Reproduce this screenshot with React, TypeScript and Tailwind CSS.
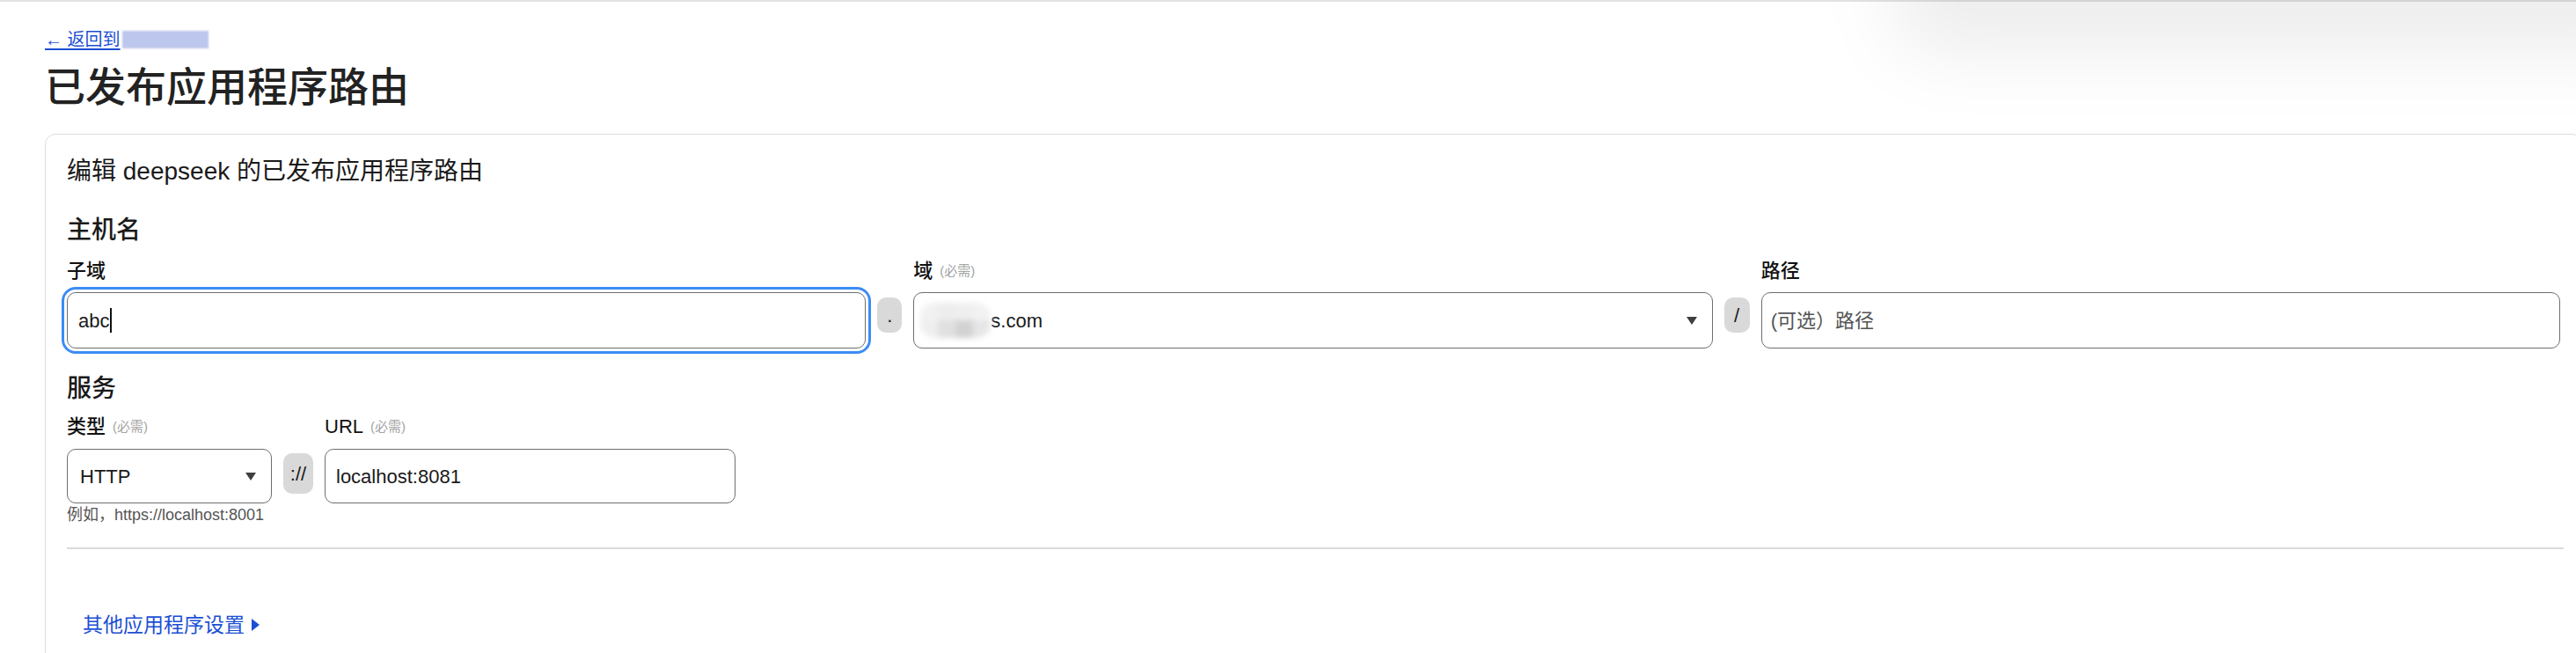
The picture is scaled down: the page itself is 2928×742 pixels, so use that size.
import React from "react";

const FONT = "font-['Liberation_Sans','Noto_Sans_CJK_SC',sans-serif]";

function Required() {
  return <span className="ml-[8px] text-[15px] font-normal text-[#a3a3a3]">(必需)</span>;
}

function Label({ text, required }: { text: string; required?: boolean }) {
  return (
    <div className="flex h-[28px] items-center text-[22px] font-medium leading-[28px] text-[#111]">
      {text}
      {required && <Required />}
    </div>
  );
}

function Caret() {
  return (
    <svg width="12" height="9" viewBox="0 0 12 9" className="shrink-0" aria-hidden="true">
      <path d="M0 0 H12 L6 9 Z" fill="#3f3f3f" />
    </svg>
  );
}

function Pill({ text, className }: { text: string; className: string }) {
  return (
    <div
      className={`flex shrink-0 items-center justify-center rounded-[10px] bg-[#d9d9d9] text-[22px] text-[#1a1a1a] ${className}`}
    >
      {text}
    </div>
  );
}

export default function App() {
  return (
    <div className={`relative h-[742px] w-[2928px] overflow-hidden bg-white ${FONT}`}>
      {/* top strip + shadow bleeding in from the right */}
      <div className="h-[2px] w-full bg-[#e2e2e2]" />
      <div className="pointer-events-none absolute right-[-120px] top-[-70px] h-[130px] w-[900px] rounded-full bg-black/[0.07] blur-[40px]" />

      <div className="pl-[51px] pt-[31px]">
        <a
          href="#"
          className="flex h-[24px] items-center text-[20px] leading-[24px] text-[#1b4fd3] underline underline-offset-[3px]"
        >
          ← 返回到
          <span className="ml-[2px] inline-block h-[20px] w-[98px] bg-[#bdc6ec] blur-[1px]" />
        </a>

        <h1 className="mt-[14px] h-[56px] text-[46px] font-medium leading-[56px] text-[#222]">
          已发布应用程序路由
        </h1>
      </div>

      <div className="ml-[51px] mt-[25px] w-[2884px] rounded-[12px] border-[1.5px] border-[#dcdcdc] px-[24px] pb-[60px] pt-[24px]">
        <h2 className="h-[36px] text-[28px] font-normal leading-[36px] text-[#1a1a1a]">
          编辑 deepseek 的已发布应用程序路由
        </h2>

        {/* 主机名 */}
        <h3 className="mt-[31px] h-[36px] text-[28px] font-medium leading-[36px] text-[#1a1a1a]">
          主机名
        </h3>
        <div className="mt-[14px] flex items-end gap-[13px]">
          <div className="flex flex-1 flex-col gap-[10px]">
            <Label text="子域" />
            <div className="flex h-[64px] items-center rounded-[10px] border-[1.5px] border-[#6e6e6e] px-[12px] text-[22px] text-[#1a1a1a] outline-[3px] outline-offset-[3px] outline-[#3b8cf6] outline-solid">
              abc
              <span className="ml-[1px] inline-block h-[28px] w-[1.5px] bg-[#111]" />
            </div>
          </div>
          <Pill text="." className="mb-[18px] h-[40px] w-[28px] text-[16px]" />
          <div className="flex flex-1 flex-col gap-[10px]">
            <Label text="域" required />
            <div className="flex h-[64px] items-center rounded-[10px] border-[1.5px] border-[#6e6e6e] pl-[7px] pr-[17px] text-[22px] text-[#1a1a1a]">
              <span className="grid h-[40px] w-[80px] grid-cols-4 grid-rows-2 overflow-hidden rounded-[16px] blur-[3px]">
                <span className="bg-[#f1f1f1]" />
                <span className="bg-[#ededed]" />
                <span className="bg-[#efefef]" />
                <span className="bg-[#f2f2f2]" />
                <span className="bg-[#efefef]" />
                <span className="bg-[#e0e0e0]" />
                <span className="bg-[#d2d2d2]" />
                <span className="bg-[#e6e6e6]" />
              </span>
              <span>s.com</span>
              <span className="flex-1" />
              <Caret />
            </div>
          </div>
          <Pill text="/" className="mb-[18px] h-[40px] w-[29px]" />
          <div className="flex flex-1 flex-col gap-[10px]">
            <Label text="路径" />
            <div className="flex h-[64px] items-center rounded-[10px] border-[1.5px] border-[#6e6e6e] px-[10px] text-[22px] text-[#555]">
              (可选）路径
            </div>
          </div>
        </div>

        {/* 服务 */}
        <h3 className="mt-[28px] h-[36px] text-[28px] font-medium leading-[36px] text-[#1a1a1a]">
          服务
        </h3>
        <div className="mt-[11px] flex items-start gap-[13px]">
          <div className="flex w-[233px] flex-col gap-[11px]">
            <Label text="类型" required />
            <div>
              <div className="flex h-[62px] items-center justify-between rounded-[10px] border-[1.5px] border-[#6e6e6e] pl-[14px] pr-[17px] text-[22px] text-[#1a1a1a]">
                HTTP
                <Caret />
              </div>
              <div className="mt-[2px] h-[22px] whitespace-nowrap text-[18px] leading-[22px] text-[#555]">
                例如，https://localhost:8001
              </div>
            </div>
          </div>
          <Pill text="://" className="mt-[44px] h-[46px] w-[34px] text-[20px]" />
          <div className="flex w-[467px] flex-col gap-[11px]">
            <Label text="URL" required />
            <div className="flex h-[62px] items-center rounded-[10px] border-[1.5px] border-[#6e6e6e] px-[12px] text-[22px] text-[#1a1a1a]">
              localhost:8081
            </div>
          </div>
        </div>

        <div className="mr-[-4px] mt-[26px] h-[2px] bg-[#dadada]" />

        <a
          href="#"
          className="ml-[18px] mt-[72px] flex h-[28px] items-center gap-[8px] text-[23px] leading-[28px] text-[#1c4fd4]"
        >
          其他应用程序设置
          <svg width="9" height="14" viewBox="0 0 9 14" aria-hidden="true">
            <path d="M0 0 L9 7 L0 14 Z" fill="#1c4fd4" />
          </svg>
        </a>
      </div>
    </div>
  );
}
